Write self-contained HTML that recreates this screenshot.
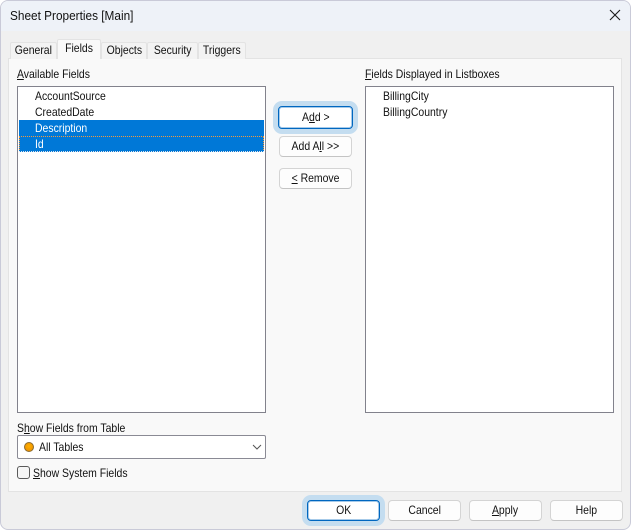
<!DOCTYPE html>
<html>
<head>
<meta charset="utf-8">
<style>
html,body{margin:0;padding:0;width:631px;height:530px;overflow:hidden;background:#fff;}
*{box-sizing:border-box;}
body{font-family:"Liberation Sans",sans-serif;font-size:12px;color:#111;position:relative;}
.abs{position:absolute;white-space:nowrap;line-height:16px;transform:scaleX(.87);transform-origin:0 50%;}
.t{display:inline-block;transform:scaleX(.87);transform-origin:50% 50%;white-space:nowrap;}
#win{position:absolute;left:0;top:0;width:631px;height:530px;background:#f0f0f0;border:1px solid #c9cad8;border-radius:8px;overflow:hidden;}
#title{position:absolute;left:1px;top:1px;width:629px;height:30px;background:#eef2f8;border-radius:7px 7px 0 0;}
#panel{position:absolute;left:8px;top:58px;width:614px;height:434px;background:#f9f9f9;border:1px solid #e3e3e3;}
.tab{position:absolute;top:42px;height:17px;background:#f3f3f3;border:1px solid #e3e3e3;border-bottom:none;border-radius:2px 2px 0 0;text-align:center;line-height:15px;}
.tab.on{top:39px;height:20px;background:#f9f9f9;line-height:17px;z-index:2;}
.list{position:absolute;top:86px;width:249px;height:327px;background:#fff;border:1px solid #82828c;}
.sel{position:absolute;left:19px;width:245px;height:16px;background:#0078d7;}
.dots{position:absolute;left:19px;top:136px;width:245px;height:16px;background:
 repeating-linear-gradient(90deg,#f59a3c 0 1px,transparent 1px 2px) 0 0/100% 1px no-repeat,
 repeating-linear-gradient(90deg,#dfe6ee 0 1px,transparent 1px 2px) 0 100%/100% 1px no-repeat,
 repeating-linear-gradient(0deg,#f59a3c 0 1px,transparent 1px 2px) 0 0/1px 100% no-repeat,
 repeating-linear-gradient(0deg,#f59a3c 0 1px,transparent 1px 2px) 100% 0/1px 100% no-repeat;}
.btn{position:absolute;height:21px;width:73px;background:#fdfdfd;border:1px solid #d4d4d4;border-bottom-color:#c4c4c4;border-radius:4px;text-align:center;line-height:19px;}
.def{background:#fff;border:1px solid #0067c0;box-shadow:inset 0 0 0 1px rgba(0,103,192,.35),0 0 0 5px #c4ddf0;}
u{text-underline-offset:1px;}
</style>
</head>
<body>
<div id="win"></div>
<div id="title"></div>
<div class="abs" style="left:10px;top:8px;font-size:12.5px;transform:scaleX(.945);">Sheet Properties [Main]</div>
<svg style="position:absolute;left:609px;top:9px" width="12" height="12" viewBox="0 0 12 12"><path d="M1 1L11 11M11 1L1 11" stroke="#1a1a1a" stroke-width="1.1" fill="none"/></svg>

<div id="panel"></div>
<div class="tab" style="left:10px;width:47px;"><span class="t">General</span></div>
<div class="tab on" style="left:57px;width:44px;"><span class="t">Fields</span></div>
<div class="tab" style="left:101px;width:46px;"><span class="t">Objects</span></div>
<div class="tab" style="left:147px;width:51px;"><span class="t">Security</span></div>
<div class="tab" style="left:198px;width:48px;"><span class="t">Triggers</span></div>

<div class="abs" style="left:17px;top:66px;"><u>A</u>vailable Fields</div>
<div class="list" style="left:17px;"></div>
<div class="sel" style="top:120px;"></div>
<div class="sel" style="top:136px;"></div>
<div class="dots"></div>
<div class="abs" style="left:35px;top:88px;">AccountSource</div>
<div class="abs" style="left:35px;top:104px;">CreatedDate</div>
<div class="abs" style="left:35px;top:120px;color:#fff;">Description</div>
<div class="abs" style="left:35px;top:136px;color:#fff;">Id</div>

<div class="btn def" style="left:278px;top:106px;width:75px;height:23px;line-height:21px;"><span class="t">A<u>d</u>d &gt;</span></div>
<div class="btn" style="left:279px;top:136px;"><span class="t">Add A<u>l</u>l &gt;&gt;</span></div>
<div class="btn" style="left:279px;top:168px;"><span class="t"><u>&lt;</u> Remove</span></div>

<div class="abs" style="left:365px;top:66px;"><u>F</u>ields Displayed in Listboxes</div>
<div class="list" style="left:365px;"></div>
<div class="abs" style="left:383px;top:88px;">BillingCity</div>
<div class="abs" style="left:383px;top:104px;">BillingCountry</div>

<div class="abs" style="left:17px;top:420px;">S<u>h</u>ow Fields from Table</div>
<div style="position:absolute;left:17px;top:435px;width:249px;height:24px;background:#fff;border:1px solid #8a8a94;border-radius:2px;"></div>
<div style="position:absolute;left:24px;top:442px;width:10px;height:10px;border-radius:50%;background:radial-gradient(circle at 50% 40%,#ffb000,#e88a00);border:1px solid #8a6a30;"></div>
<div class="abs" style="left:39px;top:439px;">All Tables</div>
<svg style="position:absolute;left:252px;top:444px" width="10" height="7" viewBox="0 0 10 7"><path d="M1 1L5 5L9 1" stroke="#555" stroke-width="1" fill="none"/></svg>
<div style="position:absolute;left:17px;top:466px;width:13px;height:13px;background:#f6f6f6;border:1px solid #5a5a5a;border-radius:3px;"></div>
<div class="abs" style="left:33px;top:465px;"><u>S</u>how System Fields</div>

<div class="btn def" style="left:307px;top:500px;"><span class="t">OK</span></div>
<div class="btn" style="left:388px;top:500px;"><span class="t">Cancel</span></div>
<div class="btn" style="left:469px;top:500px;"><span class="t"><u>A</u>pply</span></div>
<div class="btn" style="left:550px;top:500px;"><span class="t">Help</span></div>
</body>
</html>
